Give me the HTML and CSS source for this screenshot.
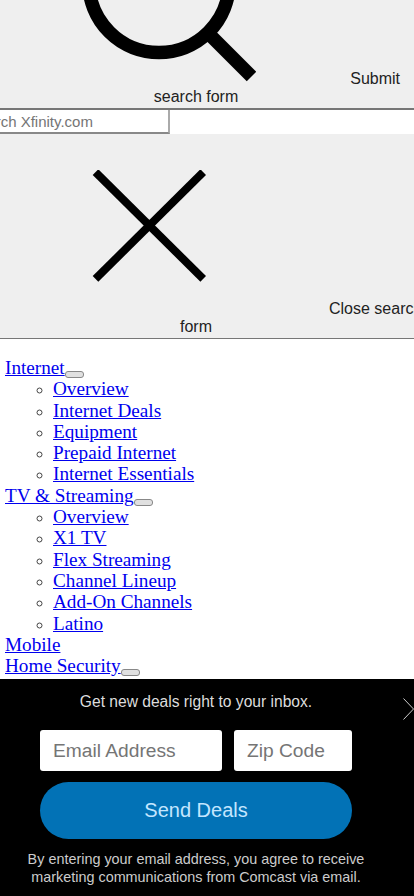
FILE: index.html
```html
<!DOCTYPE html>
<html lang="en">
<head>
  <meta charset="UTF-8" />
  <meta name="viewport" content="width=device-width, initial-scale=1.0"/>
  <title>Xfinity</title>
  <link rel="stylesheet" href="styles.css">
</head>
<body>
  <div class="search-submit">
    <div class="search-icon-row">
      <svg class="search-icon" width="172" height="82" viewBox="0 0 172 82">
        <circle cx="75" cy="-17.700" r="70.200" fill="none" stroke="#000" stroke-width="13.600"/>
        <line x1="126" y1="35" x2="167.500" y2="76.500" stroke="#000" stroke-width="13.500"/>
      </svg>
      <span class="submit-label">Submit</span>
    </div>
    <div class="form-label">search form</div>
  </div>

  <div class="search-row">
    <input class="search-input" type="text" placeholder="Search Xfinity.com">
  </div>

  <div class="search-close">
    <div class="close-icon-row">
      <svg class="close-icon" width="114" height="113" viewBox="0 0 114 113">
        <line x1="3.500" y1="2.100" x2="111.200" y2="108.900" stroke="#000" stroke-width="8"/>
        <line x1="111.200" y1="2.100" x2="3.500" y2="108.900" stroke="#000" stroke-width="8"/>
      </svg>
      <span class="close-label">Close search</span>
    </div>
    <div class="form-label">form</div>
  </div>

  <nav class="main-nav">
    <div><a href="#">Internet</a><button class="toggle"></button></div>
    <ul>
      <li><a href="#">Overview</a></li>
      <li><a href="#">Internet Deals</a></li>
      <li><a href="#">Equipment</a></li>
      <li><a href="#">Prepaid Internet</a></li>
      <li><a href="#">Internet Essentials</a></li>
    </ul>
    <div><a href="#">TV &amp; Streaming</a><button class="toggle"></button></div>
    <ul>
      <li><a href="#">Overview</a></li>
      <li><a href="#">X1 TV</a></li>
      <li><a href="#">Flex Streaming</a></li>
      <li><a href="#">Channel Lineup</a></li>
      <li><a href="#">Add-On Channels</a></li>
      <li><a href="#">Latino</a></li>
    </ul>
    <div><a href="#">Mobile</a></div>
    <div><a href="#">Home Security</a><button class="toggle"></button></div>
  </nav>

  <div class="deals">
    <svg class="deals-close" width="11" height="24" viewBox="0 0 11 24">
      <polyline points="0.5,1.5 10.5,12 0.5,22.500" fill="none" stroke="#ccc" stroke-width="1"/>
    </svg>
    <p class="deals-title">Get new deals right to your inbox.</p>
    <form class="deals-form">
      <div class="deals-fields">
        <input class="deals-input email" type="text" placeholder="Email Address">
        <input class="deals-input zip" type="text" placeholder="Zip Code">
      </div>
      <button class="deals-send" type="button">Send Deals</button>
    </form>
    <p class="deals-note">By entering your email address, you agree to receive marketing communications from Comcast via email.</p>
  </div>
</body>
</html>
```

FILE: styles.css
```css
html, body {
  height: 896px;
  overflow: hidden;
}

body {
  background: #fff;
  margin: 0;
  padding: 0;
  font-family: 'Liberation Serif', serif;
  font-size: 19.2px;
}

.search-submit,
.search-close {
  background: #efefef;
  color: #222;
  font-family: 'Liberation Sans', sans-serif;
  font-size: 16px;
  overflow: hidden;
}

.search-submit {
  height: 108px;
}

.search-icon-row {
  display: flex;
  align-items: flex-end;
  height: 87px;
}

.search-icon {
  margin-left: 84px;
  margin-bottom: 5px;
}

.submit-label {
  margin-left: auto;
  margin-right: 14px;
  line-height: 17px;
}

.form-label {
  text-align: center;
  margin-left: -22px;
  line-height: 20px;
}

.search-row {
  background: #fff;
  border-top: 2px solid #767676;
  height: 24px;
  display: flex;
}

.search-input {
  box-sizing: border-box;
  width: 203px;
  height: 24px;
  margin-left: -33px;
  padding: 1px 2px;
  border: 0;
  border-bottom: 2px solid #888;
  border-right: 2px solid #aaa;
  font-family: 'Liberation Sans', sans-serif;
  font-size: 15px;
}

.search-close {
  height: 205px;
  border-bottom: 1px solid #767676;
  box-sizing: border-box;
  padding-top: 36px;
}

.close-icon-row {
  display: flex;
  align-items: flex-end;
  height: 147px;
}

.close-icon {
  margin-left: 92px;
  margin-bottom: 34px;
  flex: none;
}

.close-label {
  margin-left: 123px;
  line-height: 17px;
  white-space: nowrap;
}

.main-nav {
  padding: 18px 0 0 5px;
  line-height: 21.3px;
}

.main-nav ul {
  margin: 0;
  padding-left: 48px;
  list-style: circle;
}

.main-nav li::marker {
  color: #444;
  font-size: 16px;
}

.main-nav a {
  color: #00e;
}

.toggle {
  width: 19px;
  height: 7px;
  padding: 0;
  background: #e0e0e0;
  border: 1px solid #888;
  border-radius: 3px;
  vertical-align: -3px;
}

.deals {
  position: fixed;
  left: 0;
  right: 0;
  bottom: 0;
  height: 217px;
  background: #000;
  color: #ddd;
  font-family: 'Liberation Sans', sans-serif;
  text-align: center;
}

.deals-close {
  position: absolute;
  top: 18px;
  right: 0;
}

.deals-title {
  margin: 14px 0 19px;
  padding-right: 22px;
  font-size: 15.6px;
  line-height: 18px;
}

.deals-form {
  width: 312px;
  margin-left: 40px;
}

.deals-fields {
  display: flex;
  gap: 12px;
}

.deals-input {
  box-sizing: border-box;
  height: 41px;
  padding: 0 13px;
  border: 0;
  border-radius: 3px;
  background: #fff;
  font-family: 'Liberation Sans', sans-serif;
  font-size: 19.2px;
}

.deals-input.email {
  width: 182px;
}

.deals-input.zip {
  width: 118px;
}

.deals-send {
  display: block;
  width: 312px;
  height: 57px;
  margin-top: 11px;
  border: 0;
  border-radius: 29px;
  background: #0272b6;
  color: #c4e6ff;
  font-family: 'Liberation Sans', sans-serif;
  font-size: 20px;
}

.deals-note {
  width: 350px;
  margin: 11px 0 0 21px;
  font-size: 14.4px;
  line-height: 18px;
  color: #ccc;
}
```
